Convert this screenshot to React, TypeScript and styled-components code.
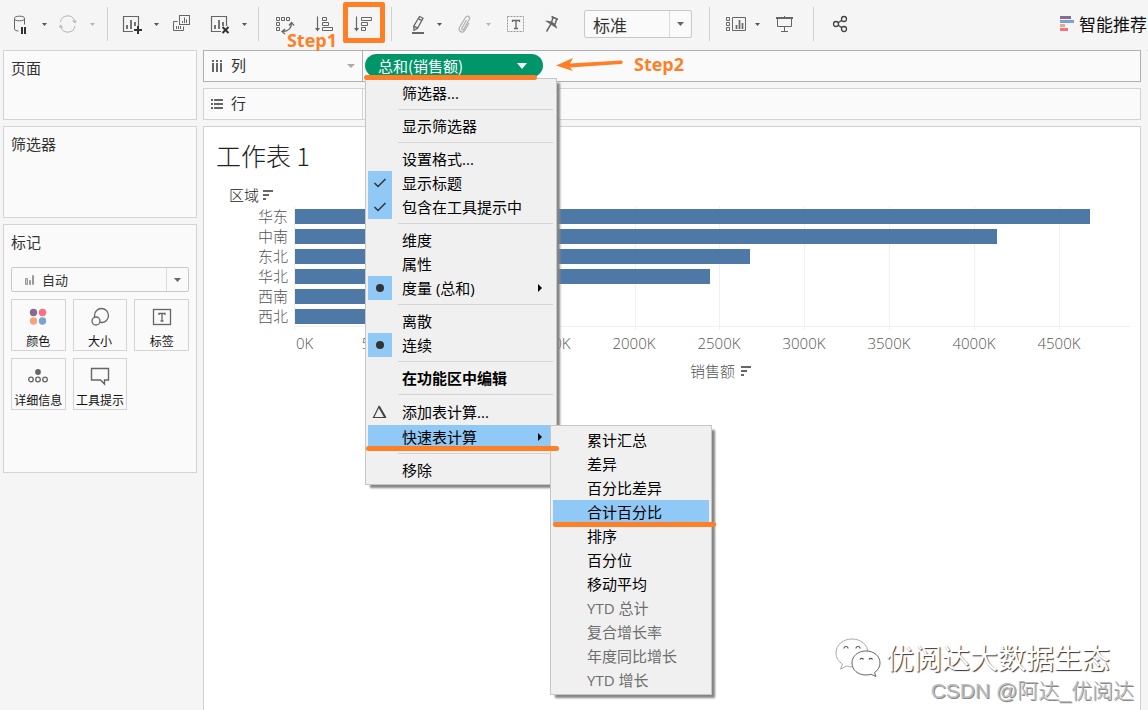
import React from "react";
import styled, { createGlobalStyle, css } from "styled-components";

const ACCENT = "#ff7f27";
const INK = "#666";
const SANS = `"Open Sans", "Noto Sans CJK SC", sans-serif`;
const CJK = `"Noto Sans CJK SC", sans-serif`;

const GlobalStyle = createGlobalStyle`
  *, *::before, *::after { box-sizing: border-box; }
  body { margin: 0; background: #f5f5f5; font-family: ${SANS}; color: #333; }
  button, select { font-family: inherit; color: inherit; }
`;

/* ---------- page frame ---------- */

const Page = styled.div`
  display: flex;
  flex-direction: column;
  min-height: 100vh;
  overflow: hidden;
`;

const Toolbar = styled.header`
  display: flex;
  align-items: center;
  height: 50px;
  padding-bottom: 2px;
`;

const ToolGroup = styled.div<{ $gap: number; $start: number; $end?: number }>`
  display: flex;
  align-items: center;
  flex: none;
  gap: ${(p) => p.$gap}px;
  padding: 0 ${(p) => p.$end ?? 0}px 0 ${(p) => p.$start}px;
`;

const SplitButton = styled.div`
  display: flex;
  align-items: center;
  gap: 4px;
`;

const ToolButton = styled.button<{ $muted?: boolean }>`
  position: relative;
  display: flex;
  width: 24px;
  height: 24px;
  padding: 0;
  border: 0;
  background: none;
  color: ${(p) => (p.$muted ? "#b4b4b4" : INK)};
`;

const CaretButton = styled.button<{ $muted?: boolean }>`
  display: flex;
  align-items: center;
  justify-content: center;
  width: 16px;
  height: 24px;
  padding: 0;
  border: 0;
  background: none;
  color: ${(p) => (p.$muted ? "#b4b4b4" : "#555")};
`;

const Separator = styled.span`
  flex: none;
  width: 1px;
  height: 34px;
  background: #d0d0d0;
`;

const SmartButton = styled.button`
  display: flex;
  align-items: center;
  gap: 5px;
  margin-left: auto;
  padding: 0 1px 0 0;
  border: 0;
  background: none;
  font-family: ${CJK};
  font-size: 17px;
  line-height: 24px;
  color: #111;
  white-space: nowrap;
`;

const Body = styled.div`
  display: flex;
  flex: 1;
  gap: 6px;
  padding-left: 3px;
`;

const Sidebar = styled.aside`
  display: flex;
  flex-direction: column;
  flex: none;
  gap: 6px;
  width: 194px;
`;

const Main = styled.main`
  display: flex;
  flex-direction: column;
  flex: 1;
  gap: 6px;
  min-width: 0;
`;

const RightPane = styled.div`
  flex: none;
  width: 1px;
  border-top: 1px solid #d4d4d4;
`;

/* ---------- side cards ---------- */

const Card = styled.section<{ $height: number }>`
  min-height: ${(p) => p.$height}px;
  padding: 7px;
  border: 1px solid #d4d4d4;
  background: #fafafa;
`;

const CardTitle = styled.h2`
  margin: 0;
  font-family: ${CJK};
  font-size: 15px;
  font-weight: 400;
  line-height: 20px;
`;

const SelectBox = styled.div<{ $height: number; $arrow: number }>`
  position: relative;
  height: ${(p) => p.$height}px;
  border: 1px solid #c8c8c8;
  border-radius: 2px;
  background: #fafafa;
  &::after {
    content: "";
    position: absolute;
    top: 0;
    bottom: 0;
    right: ${(p) => p.$arrow}px;
    border-left: 1px solid #dcdcdc;
  }
`;

const SelectField = styled.select<{ $size: number; $indent: number }>`
  appearance: none;
  display: block;
  width: 100%;
  height: 100%;
  padding: 0 0 0 ${(p) => p.$indent}px;
  border: 0;
  background: none;
  font-family: ${CJK};
  font-size: ${(p) => p.$size}px;
`;

const SelectCaret = styled.span<{ $width: number }>`
  position: absolute;
  top: 0;
  right: 0;
  bottom: 0;
  display: flex;
  align-items: center;
  justify-content: center;
  width: ${(p) => p.$width}px;
  color: #666;
  pointer-events: none;
`;

const SelectIcon = styled.span`
  position: absolute;
  top: 0;
  bottom: 0;
  left: 12px;
  display: flex;
  align-items: center;
  pointer-events: none;
`;

const FitSelect = styled(SelectBox)`
  width: 108px;
`;

const MarkSelect = styled(SelectBox)`
  margin: 15px 0 7px;
`;

const MarkGrid = styled.div`
  display: grid;
  grid-template-columns: repeat(3, 1fr);
  gap: 7px;
`;

const MarkButton = styled.button`
  display: flex;
  flex-direction: column;
  align-items: center;
  gap: 4px;
  height: 52px;
  padding: 5px 0 0;
  border: 1px solid #d4d4d4;
  background: #fafafa;
  font-family: ${CJK};
  font-size: 12px;
  line-height: 16px;
  color: #111;
  white-space: nowrap;
  & > svg { color: ${INK}; }
`;

/* ---------- shelves ---------- */

const Shelf = styled.div<{ $active?: boolean }>`
  display: flex;
  height: 32px;
  border: 1px solid ${(p) => (p.$active ? "#b0b0b0" : "#d4d4d4")};
  background: #fafafa;
`;

const ShelfLabel = styled.div<{ $active?: boolean }>`
  display: flex;
  align-items: center;
  flex: none;
  gap: 8px;
  width: 159px;
  padding: 0 7px;
  border-right: 1px solid ${(p) => (p.$active ? "#b0b0b0" : "#d4d4d4")};
  color: #aaa;
`;

const ShelfName = styled.span`
  flex: 1;
  padding-bottom: 2px;
  font-family: ${CJK};
  font-size: 15px;
  line-height: 20px;
  color: #333;
`;

const ShelfDrop = styled.div`
  display: flex;
  align-items: flex-start;
  flex: 1;
  padding: 3px 0 0 2px;
`;

const PillSlot = styled.div`
  position: relative;
  z-index: 2;
`;

const Pill = styled.button`
  display: flex;
  align-items: center;
  justify-content: space-between;
  width: 178px;
  height: 23px;
  padding: 0 16px 0 13px;
  border: 0;
  border-radius: 12px;
  background: #00966a;
  font-family: ${CJK};
  font-size: 15px;
  line-height: 22px;
  color: #fff !important;
`;

/* ---------- menus ---------- */

const Menu = styled.ul<{ $width: number }>`
  position: absolute;
  width: ${(p) => p.$width}px;
  margin: 0;
  padding: 2px;
  border: 1px solid #c6c6c6;
  background: #f0f0f0;
  box-shadow: 4px 4px 2px -1px #858585;
  list-style: none;
`;

const MainMenu = styled(Menu)`
  top: 24px;
  left: 0;
`;

const SubMenu = styled(Menu)`
  top: 0;
  left: 182px;
`;

const MenuEntry = styled.li`
  position: relative;
`;

const MenuRule = styled.li`
  height: 1px;
  margin: 4px 1px 4px 30px;
  background: #d4d4d4;
`;

const MenuItem = styled.button<{ $tall?: number; $on?: boolean; $bold?: boolean }>`
  display: flex;
  align-items: center;
  width: 100%;
  height: ${(p) => p.$tall ?? 24}px;
  padding: 0 12px 0 0;
  border: 0;
  background: ${(p) => (p.$on ? "#90c8f6" : "none")};
  font-family: ${SANS};
  font-size: 15px;
  font-weight: ${(p) => (p.$bold ? 700 : 400)};
  line-height: 24px;
  color: #000;
  white-space: nowrap;
  text-align: left;
  &:disabled { color: #6d6d6d; }
`;

const MenuMark = styled.span<{ $on?: boolean }>`
  display: flex;
  align-items: center;
  justify-content: center;
  align-self: stretch;
  flex: none;
  width: 24px;
  margin-right: 10px;
  ${(p) => p.$on && css`background: #90c8f6;`}
`;

const MenuText = styled.span`
  flex: 1;
`;

/* ---------- tutorial marks ---------- */

const Underline = styled.span<{ $width: number; $left: number; $drop?: number }>`
  position: absolute;
  z-index: 5;
  bottom: ${(p) => -(p.$drop ?? 3)}px;
  left: ${(p) => p.$left}px;
  width: ${(p) => p.$width}px;
  height: 5px;
  border-radius: 3px;
  background: ${ACCENT};
  pointer-events: none;
`;

const Frame = styled.span`
  position: absolute;
  z-index: 5;
  inset: -10px -10px -7px -8px;
  border: 5px solid ${ACCENT};
  border-radius: 2px;
`;

const StepText = styled.span`
  font-family: ${SANS};
  font-size: 18px;
  font-weight: 700;
  line-height: 24px;
  color: ${ACCENT};
`;

const StepOne = styled(StepText)`
  position: absolute;
  z-index: 5;
  top: 16px;
  right: -1px;
`;

const StepTwo = styled.div`
  display: flex;
  align-items: center;
  gap: 11px;
  height: 20px;
  padding-left: 13px;
`;

/* ---------- worksheet ---------- */

const Sheet = styled.section`
  position: relative;
  flex: 1;
  padding: 9px 10px 0 12px;
  border: 1px solid #d0d0d0;
  border-bottom: 0;
  background: #fff;
  font-family: ${CJK};
  font-weight: 300;
`;

const SheetTitle = styled.h1`
  margin: 0;
  font-size: 25px;
  font-weight: 300;
  line-height: 38px;
  color: #222;
`;

const DimensionHead = styled.div`
  display: flex;
  align-items: center;
  gap: 4px;
  margin-top: 11px;
  padding-left: 13px;
  font-size: 15px;
  line-height: 20px;
  color: #222;
`;

const Chart = styled.div`
  display: grid;
  grid-template-columns: 72px 1fr;
  column-gap: 6px;
  margin-top: 1px;
  color: #555;
`;

const RowNames = styled.ul`
  margin: 0;
  padding: 0;
  list-style: none;
  font-size: 15px;
  line-height: 20px;
  text-align: right;
`;

const Plot = styled.div`
  position: relative;
  height: 124px;
  border-left: 1px solid #f0f0f0;
  &::after {
    content: "";
    position: absolute;
    left: 0;
    right: 0;
    bottom: 3px;
    border-top: 1px solid #f0f0f0;
  }
`;

const GridLine = styled.i`
  position: absolute;
  top: 0;
  bottom: 0;
  width: 1px;
  background: #f0f0f0;
`;

const Bars = styled.div`
  position: relative;
  display: grid;
  gap: 5px;
  padding-top: 3px;
`;

const Bar = styled.div`
  height: 15px;
  background: #4e79a7;
`;

const Axis = styled.div`
  position: relative;
  grid-column: 2;
  height: 26px;
  font-family: "Open Sans", sans-serif;
  font-size: 15px;
  line-height: 26px;
`;

const Tick = styled.span<{ $first: boolean }>`
  position: absolute;
  transform: translateX(${(p) => (p.$first ? "2px" : "-50%")});
`;

const AxisTitle = styled.div`
  display: flex;
  grid-column: 2;
  align-items: center;
  justify-content: center;
  gap: 6px;
  padding-left: 17px;
  font-size: 15px;
  line-height: 30px;
`;

const Watermark = styled.div`
  position: absolute;
  right: 6px;
  bottom: 5px;
  display: grid;
  justify-items: end;
  font-family: ${CJK};
  white-space: nowrap;
`;

const Brand = styled.div`
  display: flex;
  align-items: center;
  gap: 5px;
  padding-right: 24px;
  font-size: 28px;
  font-weight: 400;
  line-height: 34px;
  color: #fff;
  text-shadow: 1px 1px 1px #333;
`;

const Credit = styled.div`
  font-family: "Liberation Sans", "Noto Sans CJK SC", sans-serif;
  font-size: 21px;
  font-weight: 300;
  line-height: 28px;
  color: #bbb;
  text-shadow: 1px 1px 0 #888;
`;

/* ---------- icons ---------- */

const Icon = ({ children }: { children: React.ReactNode }) => (
  <svg width="24" height="24" viewBox="0 0 24 24" fill="none" stroke="currentColor" overflow="visible" aria-hidden="true">
    {children}
  </svg>
);

const Caret = ({ w = 5, h = 3 }: { w?: number; h?: number }) => (
  <svg width={w} height={h} viewBox="0 0 10 6" preserveAspectRatio="none" fill="currentColor" aria-hidden="true">
    <path d="M0 0h10L5 6z" />
  </svg>
);

const PauseDataIcon = () => (
  <Icon>
    <path d="M6.500 6.500v10.500c0 1.200 2 2 4 2" />
    <path d="M16.500 6.500v6" />
    <ellipse cx="11.500" cy="6.500" rx="5" ry="2.300" />
    <path d="M14 15v7M17 15v7" stroke="#333" strokeWidth="2" />
  </Icon>
);

const RefreshIcon = () => (
  <Icon>
    <path d="M4.500 10a7.300 7.300 0 0 1 14-1.500M19 14a7.300 7.300 0 0 1-14 1.500" />
    <path d="M16 8.500h4.500l-1.200 3zM7.500 15.500H3l1.200-3z" fill="currentColor" stroke="none" />
  </Icon>
);

const ChartFrame = () => (
  <>
    <path d="M13 19.500H3.500v-15h15V14" strokeWidth="1.200" />
    <path d="M7 17v-4M11 17V8M15 14v-4" strokeWidth="1.800" />
  </>
);

const NewSheetIcon = () => (
  <Icon>
    <ChartFrame />
    <path d="M18 14v8M14 18h8" stroke="#333" strokeWidth="2" />
  </Icon>
);

const DuplicateIcon = () => (
  <Icon>
    <rect x="5.500" y="3.500" width="10" height="9" />
    <path d="M3.500 9.500h-4v9h10v-4" />
    <path d="M8.500 11V9M10.500 11V5.500M12.500 11V7.500M2.500 17v-3M4.500 17v-3M6.500 17v-3" />
  </Icon>
);

const ClearSheetIcon = () => (
  <Icon>
    <ChartFrame />
    <path d="M14.500 15l6 6M20.500 15l-6 6" stroke="#333" strokeWidth="2" />
  </Icon>
);

const SwapIcon = () => (
  <Icon>
    <path d="M3.500 5.500h3v3h-3zM8.500 5.500h3v3h-3zM13.500 5.500h3v3h-3zM3.500 10.500h3v3h-3zM3.500 15.500h3v3h-3z" />
    <path d="M18.500 11c0 5-3 8.500-9 8.500M16 13.500l2.500-3 2.500 3M12 17l-3 2.500 3 2.500" strokeWidth="1.300" />
  </Icon>
);

const SortArrow = () => (
  <>
    <path d="M5.500 4.500V18" strokeWidth="1.200" />
    <path d="M3 16h5l-2.500 3.500z" fill="currentColor" stroke="none" />
  </>
);

const SortAscIcon = () => (
  <Icon>
    <SortArrow />
    <path d="M10.500 5.500h4v3h-4zM10.500 10.500h6v3h-6zM10.500 15.500h10v3h-10z" />
  </Icon>
);

const SortDescIcon = () => (
  <Icon>
    <SortArrow />
    <path d="M10.500 5.500h10v3h-10zM10.500 10.500h6v3h-6zM10.500 15.500h4v3h-4z" />
  </Icon>
);

const PencilIcon = () => (
  <Icon>
    <path d="M9 21h12" strokeWidth="2" />
    <path d="M16.500 4.500l3.500 1.700-5.500 10-3.500 2-.3-4zM10.700 14.200l3.800 2M15.300 6.700l3.500 1.800" strokeWidth="1.300" />
  </Icon>
);

const ClipIcon = () => (
  <Icon>
    <path d="M14.500 8l-4.500 8c-1 1.700.9 2.700 1.800 1.200l5.300-9.500c1.700-3-2-5-3.700-2.200L7.700 15c-2.300 4.200 3 7 5.200 3.200L17 11" strokeWidth="1.300" />
  </Icon>
);

const LabelIcon = () => (
  <Icon>
    <rect x="3.500" y="4.500" width="16" height="15" strokeDasharray="2 1" stroke="#999" />
    <path d="M8.500 10V8.500h7V10M12 8.500v8M10 16.500h4" strokeWidth="1.300" />
  </Icon>
);

const PinIcon = () => (
  <Icon>
    <path d="M11.500 4.500l6.500 3M13 5.500l-1.500 5M16.500 7.500l-1.500 5M7.500 9.500c3 0 7.500 2 8.500 5.500zM11 12l-4.500 7.500" strokeWidth="1.500" />
  </Icon>
);

const CardsIcon = () => (
  <Icon>
    <path d="M5.500 5.500h3v3h-3zM5.500 10.500h3v3h-3zM5.500 15.500h3v3h-3zM11.500 5.500h13v13h-13z" />
    <path d="M15.500 17v-4M18.500 17V8M21.500 17v-6" strokeWidth="1.700" />
  </Icon>
);

const PresentIcon = () => (
  <Icon>
    <path d="M3 6h17" strokeWidth="2" />
    <path d="M4.500 6v8.500h14V6M11.500 4v1M11.500 14.500v5M8 19.500h7" />
  </Icon>
);

const ShareIcon = () => (
  <Icon>
    <g stroke="#444" strokeWidth="1.300">
      <circle cx="8" cy="12" r="2.500" />
      <circle cx="16" cy="7" r="2.500" />
      <circle cx="16" cy="17" r="2.500" />
      <path d="M10.200 10.700l3.600-2.300M10.200 13.300l3.600 2.300" />
    </g>
  </Icon>
);

const SmartIcon = () => (
  <svg width="14" height="16" viewBox="0 0 14 16" aria-hidden="true">
    <path d="M0 0h11v3H0z" fill="#866b97" />
    <path d="M0 4h14v3H0z" fill="#7ba3cd" />
    <path d="M0 8h5v3H0z" fill="#f5a57b" />
    <path d="M0 12h8v3H0z" fill="#ff6e80" />
  </svg>
);

const ColumnsGlyph = () => (
  <svg width="12" height="12" viewBox="0 0 12 12" stroke={INK} strokeWidth="2" aria-hidden="true">
    <path d="M2 0v2M2 3v9M6 0v2M6 3v9M10 0v2M10 3v9" />
  </svg>
);

const RowsGlyph = () => (
  <svg width="12" height="12" viewBox="0 0 12 12" stroke={INK} strokeWidth="2" aria-hidden="true">
    <path d="M0 2h2M3 2h9M0 6h2M3 6h9M0 10h2M3 10h9" />
  </svg>
);

const SortedGlyph = () => (
  <svg width="10" height="10" viewBox="0 0 10 10" stroke={INK} strokeWidth="2" aria-hidden="true">
    <path d="M0 1h10M0 5h6M0 9h3" />
  </svg>
);

const AutoGlyph = () => (
  <svg width="11" height="12" viewBox="0 0 11 12" fill="#ccc" stroke="#999" aria-hidden="true">
    <path d="M1.500 4.500h2v6h-2zM5.500 6.500h1v4h-1zM8.500 1.500h1v9h-1z" />
  </svg>
);

const ColorIcon = () => (
  <Icon>
    <g stroke="none">
      <circle cx="7.500" cy="7.500" r="3.700" fill="#866b97" />
      <circle cx="16.500" cy="7.500" r="3.700" fill="#ff6e80" />
      <circle cx="7.500" cy="16" r="3.700" fill="#f5a57b" />
      <circle cx="16.500" cy="16" r="3.700" fill="#7ba3cd" />
    </g>
  </Icon>
);

const SizeIcon = () => (
  <Icon>
    <circle cx="13.500" cy="10.500" r="7" strokeWidth="1.300" />
    <circle cx="8" cy="16" r="4" fill="#fafafa" strokeWidth="1.300" />
  </Icon>
);

const TextIcon = () => (
  <Icon>
    <rect x="3.500" y="4.500" width="17" height="15" strokeWidth="1.300" />
    <path d="M9 10V8.500h6V10M12 8.500v7.500M10.500 16h3" strokeWidth="1.300" />
  </Icon>
);

const DetailIcon = () => (
  <Icon>
    <circle cx="12" cy="8" r="2.900" fill="currentColor" stroke="none" />
    <g strokeWidth="1.300">
      <circle cx="5" cy="15.500" r="2.300" />
      <circle cx="12" cy="15.500" r="2.300" />
      <circle cx="19" cy="15.500" r="2.300" />
    </g>
  </Icon>
);

const TooltipIcon = () => (
  <Icon>
    <path d="M3.500 4.500h17V16h-4v4l-4-4h-9z" strokeWidth="1.400" />
  </Icon>
);

const CheckGlyph = () => (
  <svg width="14" height="10" viewBox="0 0 14 10" fill="none" stroke="#333" strokeWidth="1.500" aria-hidden="true">
    <path d="M1.500 5l3.500 3.500L12.500 1" />
  </svg>
);

const DotGlyph = () => (
  <svg width="8" height="8" viewBox="0 0 8 8" aria-hidden="true">
    <circle cx="4" cy="4" r="4" fill="#333" />
  </svg>
);

const DeltaGlyph = () => (
  <svg width="16" height="14" viewBox="0 0 16 14" fill="none" stroke="#444" aria-hidden="true">
    <path d="M7 1.500L1.500 12.500h12z" strokeWidth="1.200" />
    <path d="M7 1.500l6 10.500" strokeWidth="2" />
  </svg>
);

const SubmenuArrow = () => (
  <svg width="4" height="8" viewBox="0 0 4 8" aria-hidden="true">
    <path d="M0 0l4 4-4 4z" />
  </svg>
);

const PointerArrow = () => (
  <svg width="67" height="14" viewBox="0 0 67 14" fill={ACCENT} aria-hidden="true">
    <path d="M0 8.500L17 1l-3 5.500 51-3a1.700 1.700 0 0 1 .2 3.400L14 10.500 17 14z" />
  </svg>
);

const WechatLogo = () => (
  <svg width="46" height="40" viewBox="0 0 46 40" fill="#fff" strokeWidth="1" aria-hidden="true">
    <path d="M17 2C8 2 1 8 1 16c0 5 2.500 8.500 6.500 11l-2 5 6-3c2 .6 4 .9 6 .8C27 29 33 23 33 16 33 8 26 2 17 2z" stroke="#aaa" />
    <path d="M31 14c-8 0-14 5-14 12s6 12 14 12c2 0 3.500-.3 5-.8l5 2.300-1.500-4c3.500-2.300 5.500-5.500 5.500-9.500 0-7-6-12-14-12z" stroke="#666" />
    <path d="M9 11.500a2 2 0 0 1 4 0M21 11.500a2 2 0 0 1 4 0M25 22.500a2 2 0 0 1 3.500 0M34 22.500a2 2 0 0 1 3.500 0" fill="none" stroke="#555" strokeWidth="1.200" />
  </svg>
);

/* ---------- data ---------- */

type Entry = {
  text?: string;
  mark?: "check" | "dot" | "delta";
  bold?: boolean;
  arrow?: boolean;
  tall?: number;
  open?: boolean;
};

const MENU: Entry[] = [
  { text: "筛选器..." },
  {},
  { text: "显示筛选器" },
  {},
  { text: "设置格式..." },
  { text: "显示标题", mark: "check" },
  { text: "包含在工具提示中", mark: "check" },
  {},
  { text: "维度" },
  { text: "属性" },
  { text: "度量 (总和)", mark: "dot", arrow: true },
  {},
  { text: "离散" },
  { text: "连续", mark: "dot" },
  {},
  { text: "在功能区中编辑", bold: true },
  {},
  { text: "添加表计算...", mark: "delta", tall: 26 },
  { text: "快速表计算", arrow: true, open: true },
  {},
  { text: "移除" },
];

const QUICK = ["累计汇总", "差异", "百分比差异", "合计百分比", "排序", "百分位", "移动平均"];
const QUICK_DISABLED = ["YTD 总计", "复合增长率", "年度同比增长", "YTD 增长"];
const CHOSEN = "合计百分比";

const AXIS_MAX = 4918;
const TICKS = [0, 500, 1000, 1500, 2000, 2500, 3000, 3500, 4000, 4500];
const SALES = [
  { region: "华东", value: 4683 },
  { region: "中南", value: 4132 },
  { region: "东北", value: 2680 },
  { region: "华北", value: 2444 },
  { region: "西南", value: 1300 },
  { region: "西北", value: 815 },
];
const pct = (v: number) => `${(v / AXIS_MAX) * 100}%`;

const MARKS = [
  { label: "颜色", icon: <ColorIcon /> },
  { label: "大小", icon: <SizeIcon /> },
  { label: "标签", icon: <TextIcon /> },
  { label: "详细信息", icon: <DetailIcon /> },
  { label: "工具提示", icon: <TooltipIcon /> },
];

const GLYPHS = { check: <CheckGlyph />, dot: <DotGlyph />, delta: <DeltaGlyph /> };

/* ---------- parts ---------- */

const QuickMenu = () => (
  <SubMenu $width={162}>
    {QUICK.map((text) => (
      <MenuEntry key={text}>
        <MenuItem $on={text === CHOSEN}>
          <MenuMark />
          <MenuText>{text}</MenuText>
        </MenuItem>
        {text === CHOSEN && <Underline $left={0} $width={163} />}
      </MenuEntry>
    ))}
    {QUICK_DISABLED.map((text) => (
      <MenuEntry key={text}>
        <MenuItem disabled>
          <MenuMark />
          <MenuText>{text}</MenuText>
        </MenuItem>
      </MenuEntry>
    ))}
  </SubMenu>
);

const FieldMenu = () => (
  <MainMenu $width={192}>
    {MENU.map((m, i) =>
      m.text ? (
        <MenuEntry key={i}>
          <MenuItem $on={m.open} $bold={m.bold} $tall={m.tall}>
            <MenuMark $on={m.mark === "check" || m.mark === "dot"}>{m.mark && GLYPHS[m.mark]}</MenuMark>
            <MenuText>{m.text}</MenuText>
            {m.arrow && <SubmenuArrow />}
          </MenuItem>
          {m.open && <QuickMenu />}
          {m.open && <Underline $left={-2} $width={193} $drop={2} />}
        </MenuEntry>
      ) : (
        <MenuRule key={i} role="separator" />
      )
    )}
  </MainMenu>
);

const TopBar = () => (
  <Toolbar>
    <ToolGroup $gap={4} $start={8} $end={7}>
      <SplitButton>
        <ToolButton aria-label="暂停自动更新"><PauseDataIcon /></ToolButton>
        <CaretButton aria-label="更新选项"><Caret /></CaretButton>
      </SplitButton>
      <SplitButton>
        <ToolButton $muted aria-label="刷新"><RefreshIcon /></ToolButton>
        <CaretButton $muted aria-label="刷新选项"><Caret /></CaretButton>
      </SplitButton>
    </ToolGroup>
    <Separator />
    <ToolGroup $gap={10} $start={12} $end={6}>
      <SplitButton>
        <ToolButton aria-label="新建工作表"><NewSheetIcon /></ToolButton>
        <CaretButton aria-label="新建选项"><Caret /></CaretButton>
      </SplitButton>
      <ToolButton aria-label="复制"><DuplicateIcon /></ToolButton>
      <SplitButton>
        <ToolButton aria-label="清除工作表"><ClearSheetIcon /></ToolButton>
        <CaretButton aria-label="清除选项"><Caret /></CaretButton>
      </SplitButton>
    </ToolGroup>
    <Separator />
    <ToolGroup $gap={15} $start={14} $end={16}>
      <ToolButton aria-label="交换行和列"><SwapIcon /></ToolButton>
      <ToolButton aria-label="升序排序">
        <SortAscIcon />
        <StepOne>Step1</StepOne>
      </ToolButton>
      <ToolButton aria-label="降序排序">
        <SortDescIcon />
        <Frame />
      </ToolButton>
    </ToolGroup>
    <Separator />
    <ToolGroup $gap={5} $start={11}>
      <SplitButton>
        <ToolButton aria-label="突出显示"><PencilIcon /></ToolButton>
        <CaretButton aria-label="突出显示选项"><Caret /></CaretButton>
      </SplitButton>
      <SplitButton>
        <ToolButton $muted aria-label="组成员"><ClipIcon /></ToolButton>
        <CaretButton $muted aria-label="组选项"><Caret /></CaretButton>
      </SplitButton>
    </ToolGroup>
    <ToolGroup $gap={12} $start={8} $end={20}>
      <ToolButton aria-label="显示标记标签"><LabelIcon /></ToolButton>
      <ToolButton aria-label="固定轴"><PinIcon /></ToolButton>
    </ToolGroup>
    <ToolGroup $gap={0} $start={0} $end={17}>
      <FitSelect $height={28} $arrow={21}>
        <SelectField aria-label="适合" $size={17} $indent={8}>
          <option>标准</option>
        </SelectField>
        <SelectCaret $width={21}><Caret w={7} h={4} /></SelectCaret>
      </FitSelect>
    </ToolGroup>
    <Separator />
    <ToolGroup $gap={8} $start={11} $end={16}>
      <SplitButton>
        <ToolButton aria-label="显示或隐藏卡"><CardsIcon /></ToolButton>
        <CaretButton aria-label="卡选项"><Caret /></CaretButton>
      </SplitButton>
      <ToolButton aria-label="演示模式"><PresentIcon /></ToolButton>
    </ToolGroup>
    <Separator />
    <ToolGroup $gap={0} $start={14}>
      <ToolButton aria-label="共享"><ShareIcon /></ToolButton>
    </ToolGroup>
    <SmartButton>
      <SmartIcon />
      智能推荐
    </SmartButton>
  </Toolbar>
);

const Worksheet = () => (
  <Sheet>
    <SheetTitle>工作表 1</SheetTitle>
    <DimensionHead>
      区域
      <SortedGlyph />
    </DimensionHead>
    <Chart>
      <RowNames>
        {SALES.map((s) => (
          <li key={s.region}>{s.region}</li>
        ))}
      </RowNames>
      <Plot>
        {TICKS.slice(1).map((t) => (
          <GridLine key={t} style={{ left: pct(t) }} />
        ))}
        <Bars>
          {SALES.map((s) => (
            <Bar key={s.region} style={{ width: pct(s.value) }} />
          ))}
        </Bars>
      </Plot>
      <Axis>
        {TICKS.map((t) => (
          <Tick key={t} $first={t === 0} style={{ left: pct(t) }}>
            {t}K
          </Tick>
        ))}
      </Axis>
      <AxisTitle>
        销售额
        <SortedGlyph />
      </AxisTitle>
    </Chart>
    <Watermark>
      <Brand>
        <WechatLogo />
        优阅达大数据生态
      </Brand>
      <Credit>CSDN @阿达_优阅达</Credit>
    </Watermark>
  </Sheet>
);

export default function App() {
  return (
    <Page>
      <GlobalStyle />
      <TopBar />
      <Body>
        <Sidebar>
          <Card $height={70}>
            <CardTitle>页面</CardTitle>
          </Card>
          <Card $height={92}>
            <CardTitle>筛选器</CardTitle>
          </Card>
          <Card $height={249}>
            <CardTitle>标记</CardTitle>
            <MarkSelect $height={25} $arrow={21}>
              <SelectIcon><AutoGlyph /></SelectIcon>
              <SelectField aria-label="标记类型" $size={13} $indent={30}>
                <option>自动</option>
              </SelectField>
              <SelectCaret $width={21}><Caret w={7} h={4} /></SelectCaret>
            </MarkSelect>
            <MarkGrid>
              {MARKS.map((m) => (
                <MarkButton key={m.label}>
                  {m.icon}
                  {m.label}
                </MarkButton>
              ))}
            </MarkGrid>
          </Card>
        </Sidebar>
        <Main>
          <Shelf $active>
            <ShelfLabel $active>
              <ColumnsGlyph />
              <ShelfName>列</ShelfName>
              <Caret w={8} h={4} />
            </ShelfLabel>
            <ShelfDrop>
              <PillSlot>
                <Pill>
                  总和(销售额)
                  <Caret w={10} h={6} />
                </Pill>
                <FieldMenu />
                <Underline $left={-1} $width={173} />
              </PillSlot>
              <StepTwo>
                <PointerArrow />
                <StepText>Step2</StepText>
              </StepTwo>
            </ShelfDrop>
          </Shelf>
          <Shelf>
            <ShelfLabel>
              <RowsGlyph />
              <ShelfName>行</ShelfName>
            </ShelfLabel>
            <ShelfDrop />
          </Shelf>
          <Worksheet />
        </Main>
        <RightPane />
      </Body>
    </Page>
  );
}
